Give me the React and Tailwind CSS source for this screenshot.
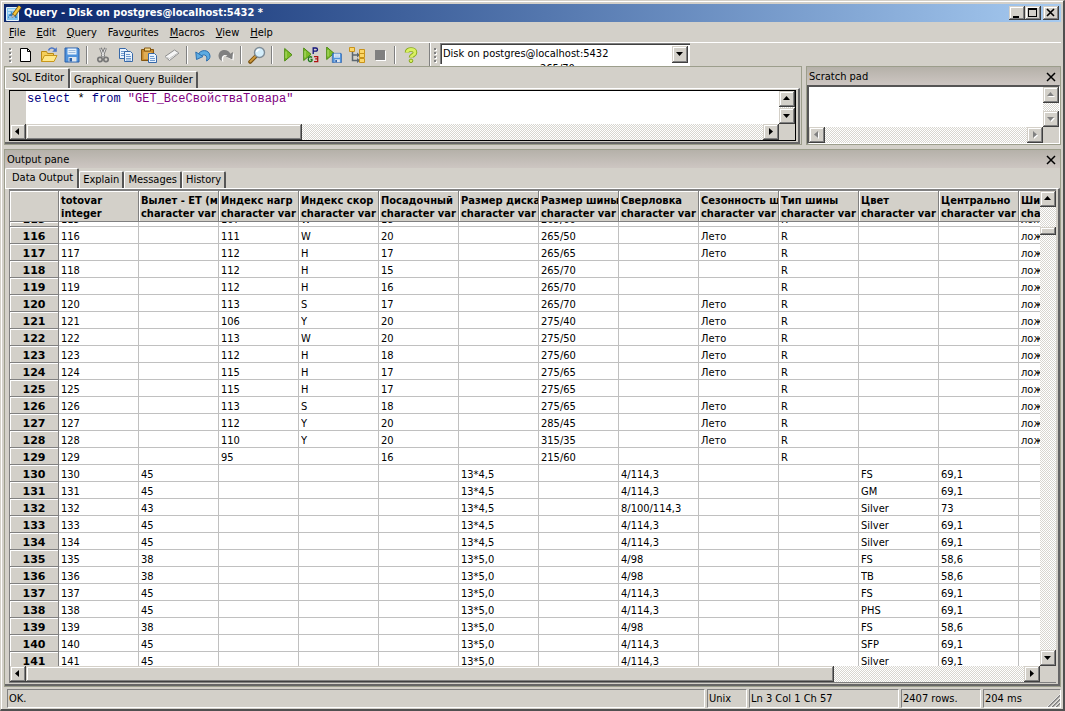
import clsx from "clsx";

const RAISED =
  "bg-[#d3d0c9] shadow-[inset_-1px_-1px_#404040,inset_1px_1px_#d4d0c8,inset_-2px_-2px_#808080,inset_2px_2px_#fff]";
const TRACK = "bg-[repeating-conic-gradient(#d8d6d0_0_25%,#fff_0_50%)] bg-[length:2px_2px]";

const MENU = [
  ["", "F", "ile"],
  ["", "E", "dit"],
  ["", "Q", "uery"],
  ["Fav", "o", "urites"],
  ["", "M", "acros"],
  ["", "V", "iew"],
  ["", "H", "elp"],
];

const COLUMNS = [
  ["totovar", "integer"],
  ["Вылет - ET (м", "character var"],
  ["Индекс нагр", "character var"],
  ["Индекс скор", "character var"],
  ["Посадочный", "character var"],
  ["Размер диска", "character var"],
  ["Размер шины", "character var"],
  ["Сверловка", "character var"],
  ["Сезонность ш", "character var"],
  ["Тип шины", "character var"],
  ["Цвет", "character var"],
  ["Центрально", "character var"],
  ["Ши", "cha"],
];

const tyre = (id, load, speed, rim, size, season, last = "лож") => [
  id, "", load, speed, rim, "", size, "", season, "R", "", "", last,
];
const disk = (id, et, size, pcd, color, dia) => [
  id, et, "", "", "", size, "", pcd, "", "", color, dia, "",
];

const ROWS = [
  tyre(115, "107", "W", "18", "265/60", ""),
  tyre(116, "111", "W", "20", "265/50", "Лето"),
  tyre(117, "112", "H", "17", "265/65", "Лето"),
  tyre(118, "112", "H", "15", "265/70", ""),
  tyre(119, "112", "H", "16", "265/70", ""),
  tyre(120, "113", "S", "17", "265/70", "Лето"),
  tyre(121, "106", "Y", "20", "275/40", "Лето"),
  tyre(122, "113", "W", "20", "275/50", "Лето"),
  tyre(123, "112", "H", "18", "275/60", "Лето"),
  tyre(124, "115", "H", "17", "275/65", "Лето"),
  tyre(125, "115", "H", "17", "275/65", ""),
  tyre(126, "113", "S", "18", "275/65", "Лето"),
  tyre(127, "112", "Y", "20", "285/45", "Лето"),
  tyre(128, "110", "Y", "20", "315/35", "Лето"),
  tyre(129, "95", "", "16", "215/60", "", ""),
  disk(130, "45", "13*4,5", "4/114,3", "FS", "69,1"),
  disk(131, "45", "13*4,5", "4/114,3", "GM", "69,1"),
  disk(132, "43", "13*4,5", "8/100/114,3", "Silver", "73"),
  disk(133, "45", "13*4,5", "4/114,3", "Silver", "69,1"),
  disk(134, "45", "13*4,5", "4/114,3", "Silver", "69,1"),
  disk(135, "38", "13*5,0", "4/98", "FS", "58,6"),
  disk(136, "38", "13*5,0", "4/98", "TB", "58,6"),
  disk(137, "45", "13*5,0", "4/114,3", "FS", "69,1"),
  disk(138, "45", "13*5,0", "4/114,3", "PHS", "69,1"),
  disk(139, "38", "13*5,0", "4/98", "FS", "58,6"),
  disk(140, "45", "13*5,0", "4/114,3", "SFP", "69,1"),
  disk(141, "45", "13*5,0", "4/114,3", "Silver", "69,1"),
];

function Svg({ size = 16, children }) {
  return (
    <svg width={size} height={size} viewBox={`0 0 ${size} ${size}`} aria-hidden="true" className="shrink-0">
      {children}
    </svg>
  );
}

const Disk = ({ x = 0, y = 0, s = 1 }) => (
  <g transform={`translate(${x} ${y}) scale(${s})`}>
    <path d="M.5 .5h13l1 1v13h-14z" fill="#4f93dd" stroke="#2a5fa8" />
    <path d="M3 1h9v6H3z" fill="#e8f2fc" />
    <path d="M4 3h7M4 5h7" stroke="#9dbbdc" />
    <path d="M4 9.5h8V14H4z" fill="#dfe6ee" />
    <path d="M5 10.5h2.5V14H5z" fill="#2a5fa8" />
  </g>
);

const Play = () => (
  <>
    <path d="M.7 1v12.500l7.300-6.200z" fill="#7dbd28" stroke="#4c8a12" strokeLinejoin="round" />
    <path d="M2 4v6.500" stroke="#b7e077" />
  </>
);

const ICONS = {
  app: (
    <Svg>
      <path d="M.5 2.5h12v13H.5z" fill="#7fc3ee" stroke="#e6f3fb" />
      <path d="M2 13l3-7 2 4 2-5 2 8z" fill="#2f80c4" />
      <path d="M2 5h7M2 8h3M3 12h6" stroke="#fff" />
      <path d="M14 1.5l-6.500 9" stroke="#7a5a10" strokeWidth="4" />
      <path d="M14 1.500l-6 8.300" stroke="#f4c63d" strokeWidth="2.400" />
      <path d="M6 12.500l.4-3 2.300 1.600z" fill="#fff" stroke="#555" strokeWidth=".5" />
    </Svg>
  ),
  new: (
    <Svg>
      <path d="M2.500 1.500h7l3 3v10h-10z" fill="#fff" stroke="#000" />
      <path d="M9.500 1.500v3h3" fill="none" stroke="#000" />
    </Svg>
  ),
  open: (
    <Svg size={18}>
      <path d="M1.500 15.500v-10h5l1 2h6v3" fill="#f5cf5b" stroke="#b98a14" />
      <path d="M1.500 15.500l3-6h12.500l-3 6z" fill="#ffe88a" stroke="#c8971a" />
      <path d="M8.500 4.500c1-3 4.500-3.500 6.500-.8" fill="none" stroke="#4a74c4" strokeWidth="1.600" />
      <path d="M16.800 1.200v4.600h-4.600z" fill="#4a74c4" />
    </Svg>
  ),
  save: (
    <Svg>
      <Disk x={0.500} y={0.500} />
    </Svg>
  ),
  cut: (
    <Svg>
      <path d="M5.500 1l3.500 9M10.500 1L7 10" stroke="#777" strokeWidth="2.800" />
      <path d="M5.600 1.500l3.200 8M10.400 1.500l-3.200 8" stroke="#ececec" />
      <circle cx="5" cy="12.500" r="2.200" fill="none" stroke="#777" strokeWidth="1.700" />
      <circle cx="11" cy="12.500" r="2.200" fill="none" stroke="#777" strokeWidth="1.700" />
    </Svg>
  ),
  copy: (
    <Svg>
      <path d="M1.500 1.500h6l2 2v8h-8z" fill="#eaf3fd" stroke="#3768a8" />
      <path d="M3 4.500h4M3 6.500h3M3 8.500h3" stroke="#6f9bd0" />
      <path d="M6.500 4.500h6l2 2v8h-8z" fill="#eaf3fd" stroke="#3768a8" />
      <path d="M8 7.500h4M8 9.500h5M8 11.500h5M8 13h5" stroke="#6f9bd0" />
    </Svg>
  ),
  paste: (
    <Svg>
      <path d="M.5 2.500h12v11H.5z" fill="#c78a2c" stroke="#85560f" />
      <path d="M3.500 1h6v3h-6z" fill="#f3d98c" stroke="#85560f" />
      <path d="M2.500 5h8v7h-8z" fill="#e0ad55" />
      <path d="M7.500 6.500h6l2 2v7h-8z" fill="#eaf3fd" stroke="#3768a8" />
      <path d="M9 9.500h4M9 11.500h5M9 13.500h5" stroke="#6f9bd0" />
    </Svg>
  ),
  erase: (
    <Svg>
      <path d="M1 9.500l9.500-6.500 4.500 3-9.500 7.500z" fill="#f5f5f5" stroke="#8d8d8d" />
      <path d="M1.500 10l4 1.500 9-6" fill="none" stroke="#c4c4c4" />
    </Svg>
  ),
  undo: (
    <Svg>
      <path d="M3 8c2-6 11.500-6 12 1 .1 2-1 4-3.500 5 .8-3 .5-5.500-2-6-2-.2-2.700.6-3.300 1.600z" fill="#5cabe2" stroke="#2c6fae" />
      <path d="M.8 5l.7 7.500 6.500-3z" fill="#5cabe2" stroke="#2c6fae" strokeLinejoin="round" />
    </Svg>
  ),
  redo: (
    <Svg>
      <g transform="translate(1 1)" fill="#fff">
        <path d="M13 8C11 2 2.500 2 1 8.500c-.1 2 1 4.500 3.500 5.500-.8-3-.5-6 2.500-6.500 2-.2 2.700.8 3.300 1.800z" />
        <path d="M15.200 5l-.7 7.500-6.500-3z" />
      </g>
      <path d="M13 8C11 1.500 1.500 1 .5 8.500c-.1 2 1 4.500 3.500 5.500-.8-3 0-5.500 2.500-6 1.500-.2 2.700.3 3.300 1.300z" fill="#808080" />
      <path d="M15 5l-.7 7.500-6.500-3z" fill="#808080" />
    </Svg>
  ),
  find: (
    <Svg size={18}>
      <path d="M2.200 15.800l5.500-5.500" stroke="#7a5312" strokeWidth="4" strokeLinecap="round" />
      <path d="M2.400 15.400l5-5" stroke="#d09a3c" strokeWidth="2" strokeLinecap="round" />
      <circle cx="11.500" cy="6.500" r="5" fill="#d4eefb" stroke="#7d8b96" strokeWidth="1.400" />
      <path d="M8.500 6c.3-1.500 1.500-2.500 3-2.500" fill="none" stroke="#fff" strokeWidth="1.500" />
    </Svg>
  ),
  run: (
    <Svg>
      <g transform="translate(4 .5)">
        <Play />
      </g>
    </Svg>
  ),
  pgscript: (
    <Svg>
      <Play />
      <path d="M10.200 7V1h2.600q1.700 0 1.700 1.600T12.800 4.200H10.200" fill="none" stroke="#14147c" strokeWidth="1.300" />
      <path d="M9 10.500q-1-1-2.300-.7-1.400.5-1.400 2.400t1.400 2.300q1.300.3 2.300-.7v-1.300H7.500" fill="none" stroke="#1c7a1c" strokeWidth="1.300" />
      <path d="M11 9.700h3.700v2.200h-2.500 2.500v2.700H11" fill="none" stroke="#b01212" strokeWidth="1.300" />
    </Svg>
  ),
  runSave: (
    <Svg>
      <g transform="translate(0 -1)">
        <Play />
      </g>
      <Disk x={6} y={6} s={0.660} />
    </Svg>
  ),
  explain: (
    <Svg>
      <path d="M3.500 5v8.500H10M3.500 8H10" fill="none" stroke="#5c6770" strokeWidth="1.500" />
      <path d="M8 5.500L11 8 8 10.500zM8 11l3 2.500L8 16z" fill="#5c6770" />
      <path d="M.5 .5h5v4h-5zM10.500 2.500h5v4h-5zM10.500 6.500h5v4h-5zM10.500 11.500h5v4h-5z" fill="#fbd668" stroke="#c8931a" />
    </Svg>
  ),
  stop: (
    <Svg>
      <path d="M4 4h10v10H4z" fill="#fff" />
      <path d="M3 3h10v10H3z" fill="#808080" />
    </Svg>
  ),
  help: (
    <Svg>
      <path d="M4 5.500C4 1.500 12 1.500 12 5.500c0 2.800-4 2.500-4 5" fill="none" stroke="#86a81a" strokeWidth="4.600" />
      <path d="M4 5.500C4 1.500 12 1.500 12 5.500c0 2.800-4 2.500-4 5" fill="none" stroke="#d9f062" strokeWidth="2.800" />
      <circle cx="8" cy="13.800" r="1.800" fill="#d9f062" stroke="#86a81a" />
    </Svg>
  ),
};

const TOOLBAR = [
  ["new", "open", "save"],
  ["cut", "copy", "paste", "erase"],
  ["undo", "redo"],
  ["find"],
  ["run", "pgscript", "runSave", "explain", "stop"],
  ["help"],
];

const ARROWS = {
  up: "M4 9h7L7.500 5z",
  down: "M4 6h7l-3.500 4z",
  left: "M9 4v7L5 7.500z",
  right: "M6 4v7l4-3.500z",
};

function ArrowButton({ dir, disabled }) {
  return (
    <button aria-label={`Scroll ${dir}`} disabled={disabled} className={clsx("size-4 shrink-0", RAISED)}>
      <svg width="16" height="16" viewBox="0 0 16 16">
        {disabled && <path d={ARROWS[dir]} transform="translate(1 1)" fill="#fff" />}
        <path d={ARROWS[dir]} fill={disabled ? "#808080" : "#000"} />
      </svg>
    </button>
  );
}

function CloseButton({ label }) {
  return (
    <button aria-label={label} className="flex size-4 items-center justify-center">
      <svg width="10" height="10" viewBox="0 0 10 10">
        <path d="M1 1l8 8M9 1L1 9" stroke="#000" strokeWidth="1.500" />
      </svg>
    </button>
  );
}

function PaneTitle({ children }) {
  return (
    <div className="flex h-[18px] items-center justify-between bg-linear-to-b from-[#b5b1a9] to-[#cdc6c2] pt-px pr-px pl-[2px]">
      <span>{children}</span>
      <CloseButton label={`Close ${children}`} />
    </div>
  );
}

function Tabs({ items }) {
  return (
    <div role="tablist" className="flex items-end">
      {items.map((item, i) => (
        <button
          key={item}
          role="tab"
          aria-selected={i === 0}
          className={clsx(
            "rounded-t-[2px] border-t border-r-2 border-l border-t-white border-r-[#555] border-l-white whitespace-nowrap",
            i === 0 ? "h-5 pr-1 pb-px pl-[6px]" : "h-[17px] px-[3px]",
          )}
        >
          {item}
        </button>
      ))}
    </div>
  );
}

function Grip() {
  return (
    <div className="flex w-2 shrink-0 flex-col items-center justify-center gap-[2px]">
      {[0, 1, 2, 3].map((n) => (
        <i key={n} className="size-[2px] bg-[#808080] shadow-[1px_1px_#fff]" />
      ))}
    </div>
  );
}

function TitleBar() {
  return (
    <header className="flex h-[18px] items-center bg-linear-to-r from-[#0a246a] to-[#a6caf0] pr-[2px] pl-[2px] text-white">
      {ICONS.app}
      <h1 className="ml-[2px] flex-1 font-bold whitespace-nowrap">
        Query - Disk on postgres@localhost:5432 *
      </h1>
      <button aria-label="Minimize" className={clsx("h-[14px] w-4", RAISED)}>
        <svg width="16" height="14">
          <path d="M4 10h6v2H4z" />
        </svg>
      </button>
      <button aria-label="Maximize" className={clsx("h-[14px] w-4", RAISED)}>
        <svg width="16" height="14">
          <path d="M3 2h9v9H3zM4 4v6h7V4z" fillRule="evenodd" />
        </svg>
      </button>
      <button aria-label="Close" className={clsx("ml-[2px] h-[14px] w-4", RAISED)}>
        <svg width="16" height="14">
          <path d="M4 3l7 7M11 3l-7 7" stroke="#000" strokeWidth="1.600" />
        </svg>
      </button>
    </header>
  );
}

function ToolBar() {
  return (
    <div className="flex h-6 border-t border-white">
      <div className="flex items-center pl-[2px]">
        <Grip />
        {TOOLBAR.map((group, i) => (
          <div key={group[0]} className="flex items-center">
            {i > 0 && <span className="mx-[3px] h-[18px] w-[2px] border-l border-l-[#808080] bg-white" />}
            {group.map((name) => (
              <button key={name} aria-label={name} className="flex h-[22px] w-[23px] items-center justify-center">
                {ICONS[name]}
              </button>
            ))}
          </div>
        ))}
      </div>
      <div className="ml-[7px] flex border-l border-[#808080] shadow-[inset_1px_0_#fff]">
        <div className="flex pr-px pl-[1px]">
          <Grip />
        </div>
        <div className="flex w-[250px] flex-col overflow-hidden bg-white">
          <div className="relative h-[21px] shrink-0 border-t border-l border-[#808080] bg-white shadow-[inset_1px_1px_#404040]">
            <select
              aria-label="Connection"
              className="h-full w-full appearance-none bg-transparent pr-5 pl-[2px] outline-none"
            >
              <option>Disk on postgres@localhost:5432</option>
            </select>
            <span className={clsx("pointer-events-none absolute top-[2px] right-[2px] h-[17px] w-4", RAISED)}>
              <svg width="16" height="16">
                <path d={ARROWS.down} />
              </svg>
            </span>
          </div>
          <div className="h-[2px] pl-[100px] leading-[10px]">265/70</div>
        </div>
      </div>
    </div>
  );
}

function SqlPanel() {
  return (
    <section className="flex min-w-0 flex-1 flex-col border border-[#9c9e8c] pt-px pr-px">
      <Tabs items={["SQL Editor", "Graphical Query Builder"]} />
      <div className="flex min-h-0 flex-1 border-t border-r-2 border-b-2 border-t-white border-r-[#666] border-b-[#666] pt-px pr-[2px] pb-px pl-1">
        <div className="grid min-w-0 flex-1 grid-cols-[1fr_16px] grid-rows-[1fr_16px] border border-black bg-[#d3d0c9]">
          <div className="flex min-h-0 overflow-hidden bg-white">
            <span className="w-4 shrink-0 bg-[#d3d0c9]" />
            <div
              role="textbox"
              aria-label="SQL query"
              contentEditable
              suppressContentEditableWarning
              className="flex-1 pl-px font-['Liberation_Mono',monospace] text-[12px] leading-4 whitespace-pre text-[#7f007f] outline-none"
            >
              <span className="text-[#00007f]">select</span> <span className="text-black">*</span>{" "}
              <span className="text-[#00007f]">from</span> "GET_ВсеСвойстваТовара"
            </div>
          </div>
          <div className={clsx("flex flex-col justify-between", TRACK)}>
            <ArrowButton dir="up" />
            <ArrowButton dir="down" />
          </div>
          <div className={clsx("flex justify-between", TRACK)}>
            <ArrowButton dir="left" />
            <div className="flex flex-1">
              <div className={clsx("w-[37.5%]", RAISED)} />
            </div>
            <ArrowButton dir="right" />
          </div>
        </div>
      </div>
    </section>
  );
}

function ScratchPad() {
  return (
    <section className="flex w-[255px] shrink-0 flex-col border border-[#9c9e8c]">
      <PaneTitle>Scratch pad</PaneTitle>
      <div className="grid min-h-0 flex-1 grid-cols-[1fr_16px] grid-rows-[1fr_16px] border-t-2 border-r border-b border-l-2 border-t-[#555] border-r-white border-b-white border-l-[#555]">
        <textarea aria-label="Scratch pad" className="block resize-none bg-white outline-none" />
        <div className={clsx("flex flex-col justify-between", TRACK)}>
          <ArrowButton dir="up" disabled />
          <ArrowButton dir="down" disabled />
        </div>
        <div className={clsx("flex justify-between", TRACK)}>
          <ArrowButton dir="left" disabled />
          <ArrowButton dir="right" disabled />
        </div>
        <span className="bg-[#d3d0c9]" />
      </div>
    </section>
  );
}

function DataTable() {
  return (
    <table className="w-[1089px] table-fixed border-separate border-spacing-0 bg-white">
      <colgroup>
        <col className="w-[49px]" />
        {COLUMNS.map(([name]) => (
          <col key={name} className="w-[80px]" />
        ))}
      </colgroup>
      <thead>
        <tr className="h-[31px] bg-[#d3d0c9] text-left align-top leading-[13px]">
          <td className="border-r border-b border-[#808080] shadow-[inset_1px_1px_#fff]" />
          {COLUMNS.map(([name, type]) => (
            <th
              key={name}
              scope="col"
              className="overflow-hidden border-r border-b border-[#808080] pt-[3px] pl-[2px] whitespace-nowrap shadow-[inset_1px_1px_#fff]"
            >
              {name}
              <br />
              {type}
            </th>
          ))}
        </tr>
      </thead>
      <tbody>
        {ROWS.map((row, r) => {
          // the top row is scrolled almost out of view
          const clip = clsx("flex flex-col justify-end overflow-hidden", r === 0 ? "h-1" : "h-4");
          const line = "h-4 shrink-0 leading-[19px] whitespace-nowrap";
          return (
            <tr key={row[0]}>
              <th
                scope="row"
                className="border-r border-b border-[#808080] bg-[#d3d0c9] p-0 font-['DejaVu_Sans',sans-serif] shadow-[inset_1px_1px_#fff]"
              >
                <div className={clip}>
                  <div className={line}>{row[0]}</div>
                </div>
              </th>
              {row.map((value, i) => (
                <td key={i} className="border-r border-b border-[#c0c0c0] p-0 pl-[2px]">
                  <div className={clip}>
                    <div className={line}>{value}</div>
                  </div>
                </td>
              ))}
            </tr>
          );
        })}
      </tbody>
    </table>
  );
}

function OutputPane() {
  return (
    <section className="mt-1 flex min-h-0 flex-1 flex-col border border-[#9c9e8c]">
      <PaneTitle>Output pane</PaneTitle>
      <Tabs items={["Data Output", "Explain", "Messages", "History"]} />
      <div className="flex min-h-0 flex-1 border-t border-r-2 border-b-2 border-t-white border-r-[#666] border-b-[#666] pr-[2px] pb-px pl-1">
        <div className="grid min-w-0 flex-1 grid-cols-[1fr_16px] grid-rows-[1fr_16px] border-t-2 border-b border-l border-[#808080] bg-[#d3d0c9]">
          <div className="min-h-0 min-w-0 overflow-hidden bg-white">
            <DataTable />
          </div>
          <div className={clsx("flex flex-col", TRACK)}>
            <ArrowButton dir="up" />
            <div className="flex-1 pt-5">
              <div className={clsx("h-2", RAISED)} />
            </div>
            <ArrowButton dir="down" />
          </div>
          <div className={clsx("flex", TRACK)}>
            <ArrowButton dir="left" />
            <div className="flex flex-1">
              <div className={clsx("w-[81%]", RAISED)} />
            </div>
            <ArrowButton dir="right" />
          </div>
        </div>
      </div>
    </section>
  );
}

function StatusBar() {
  const field =
    "flex items-center border border-t-[#808080] border-l-[#808080] border-r-white border-b-white pl-px whitespace-nowrap";
  return (
    <footer className="mt-[2px] mb-px flex h-[19px] gap-[2px] pl-[3px]">
      <div className={clsx(field, "flex-1")}>OK.</div>
      <div className={clsx(field, "w-10")}>Unix</div>
      <div className={clsx(field, "w-[150px]")}>Ln 3 Col 1 Ch 57</div>
      <div className={clsx(field, "w-20")}>2407 rows.</div>
      <div className={clsx(field, "w-[78px] justify-between")}>
        204 ms
        <svg width="14" height="14" className="self-end" aria-hidden="true">
          <path d="M2 14L14 2M6 14l8-8M10 14l4-4" stroke="#808080" strokeWidth="1.600" />
          <path d="M1 14L14 1M5 14l9-9M9 14l5-5" stroke="#fff" strokeWidth=".7" />
        </svg>
      </div>
    </footer>
  );
}

export default function App() {
  return (
    <div className="flex h-screen flex-col border-t border-r-2 border-b-2 border-l border-t-[#d4d0c8] border-r-[#505050] border-b-[#505050] border-l-[#d4d0c8] bg-[#d3d0c9] font-['DejaVu_Sans_Condensed','DejaVu_Sans',sans-serif] text-[11px] leading-[14px] text-black">
      <div className="flex min-h-0 flex-1 flex-col border-t border-l border-white pt-[2px] pr-[2px] pl-[2px]">
        <TitleBar />
        <nav className="flex h-5 items-center gap-[11px] pt-px pl-[5px]">
          {MENU.map(([pre, key, post]) => (
            <button key={key}>
              {pre}
              <u>{key}</u>
              {post}
            </button>
          ))}
        </nav>
        <ToolBar />
        <div className="flex h-[79px] shrink-0 gap-1">
          <SqlPanel />
          <ScratchPad />
        </div>
        <OutputPane />
        <StatusBar />
      </div>
    </div>
  );
}
